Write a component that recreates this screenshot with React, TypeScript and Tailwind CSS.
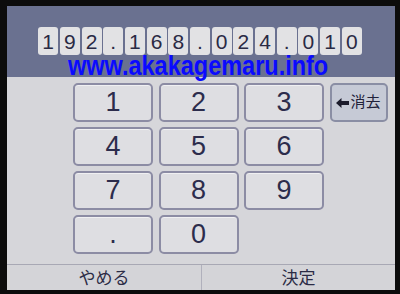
import React from "react";

const ip = "192.168.024.010".split("");

const keys = ["1", "2", "3", "4", "5", "6", "7", "8", "9", ".", "0"];

const keyClass =
  "flex items-center justify-center rounded-[5px] border-2 border-[#8c8ca4] bg-[#dedee2] text-[27px] text-[#2c2c4c] shadow-[inset_0_1px_0_#f0f0f2]";

const App: React.FC = () => {
  return (
    <div
      className="w-[400px] h-[294px] bg-[#0c0c0c] pt-[6px] pl-[7px] pr-[5px] pb-[4px]"
      style={{ fontFamily: '"Liberation Sans", "Noto Sans CJK JP", sans-serif' }}
    >
      <div className="relative w-full h-full flex flex-col bg-[#d6d6da] overflow-hidden">
        {/* IP display */}
        <div className="h-[71px] bg-[#6a7190] pt-[21px] flex justify-center pr-[2px]">
          <div className="flex gap-[1.7px] h-[28px]">
            {ip.map((c, i) => (
              <div
                key={i}
                className="w-[20px] h-[28px] rounded-[3px] bg-[#e2e2e4] flex items-center justify-center text-[21px] text-[#2a2a44] leading-none"
              >
                {c}
              </div>
            ))}
          </div>
        </div>

        {/* keypad */}
        <div className="flex-1 pt-[6px] pl-[66px] flex gap-x-[5.5px] items-start">
          <div className="grid grid-cols-[80px_80px_80px] grid-rows-[39px_39px_39px_39px] gap-x-[5.5px] gap-y-[5px]">
            {keys.map((k) => (
              <button key={k} className={keyClass}>
                {k}
              </button>
            ))}
          </div>
          <button className="w-[58px] h-[39px] flex items-center justify-center gap-[1px] rounded-[5px] border-2 border-[#8a8ea4] bg-[#c6cad6] text-[15px] text-[#22223a]">
            <svg width="13" height="10" viewBox="0 0 13 10">
              <path d="M0 5 L5.5 0 L5.5 3 L13 3 L13 7 L5.5 7 L5.5 10 Z" fill="#1c1c2c" />
            </svg>
            <span>消去</span>
          </button>
        </div>

        {/* bottom bar */}
        <div className="h-[26px] flex border-t border-[#a8a8b4] bg-[#d4d4d8] text-[17px] text-[#2c2c46]">
          <div className="w-[195px] flex items-center justify-center border-r border-[#b0b0bc] pt-[2px]">
            やめる
          </div>
          <div className="flex-1 flex items-center justify-center pt-[2px]">決定</div>
        </div>

        {/* watermark */}
        <div className="absolute left-[61px] top-[47px] text-[27px] font-bold text-[#0a0aff] leading-none whitespace-nowrap origin-left scale-x-[0.87]">
          www.akakagemaru.info
        </div>
      </div>
    </div>
  );
};

export default App;
